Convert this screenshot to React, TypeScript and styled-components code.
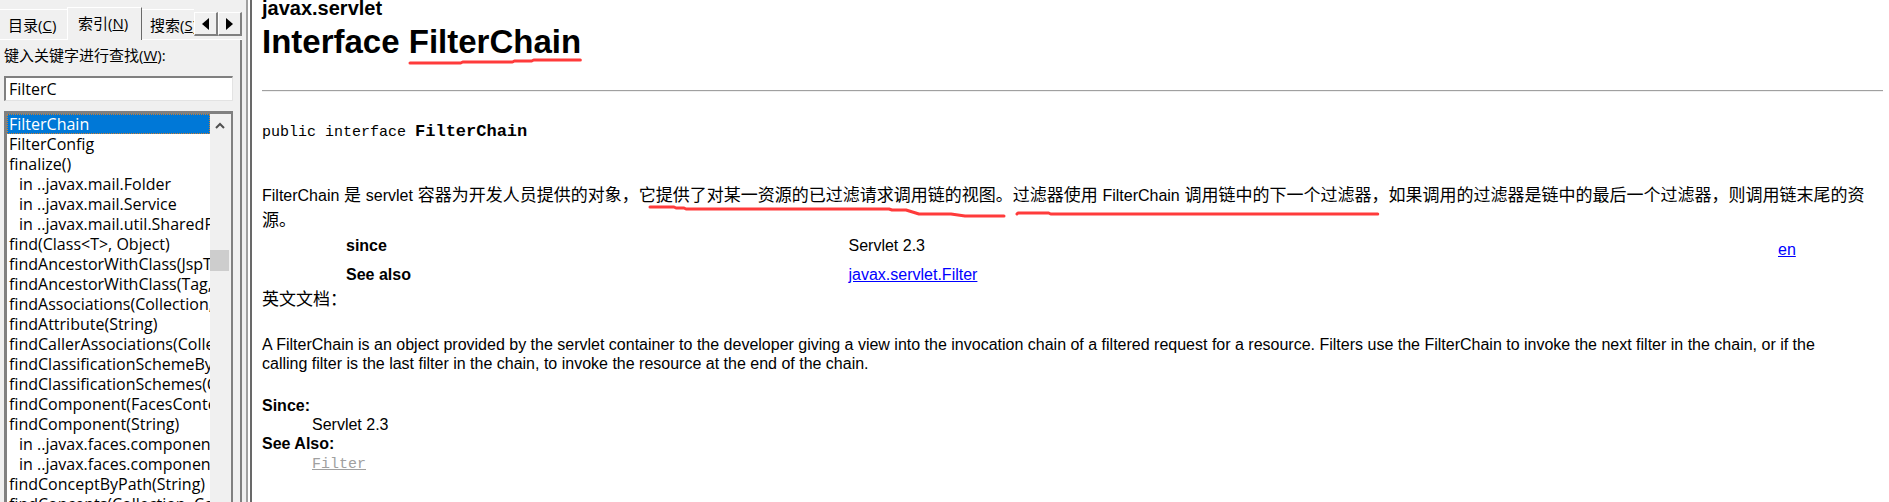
import React from "react";
import styled, { createGlobalStyle, css } from "styled-components";

const GlobalStyle = createGlobalStyle`
  *, *::before, *::after { box-sizing: border-box; }
  html, body { margin: 0; height: 100%; overflow: hidden; }
  #root { height: 100%; }
`;

const uiFont = `"Open Sans", "Noto Sans CJK SC", sans-serif`;
const docFont = `"Liberation Sans", Arial, "Noto Sans CJK SC", sans-serif`;
const monoFont = `"Liberation Mono", "Courier New", monospace`;

const Window = styled.div`
  display: flex;
  height: 100vh;
  background: #fff;
  color: #000;
`;

const Sidebar = styled.aside`
  flex: 0 0 246px;
  min-width: 0;
  display: flex;
  flex-direction: column;
  padding-right: 4px;
  background: #f0f0f0;
  font: 15px/20px ${uiFont};
`;

const Splitter = styled.div`
  flex: 0 0 6px;
  border: solid;
  border-width: 0 2px;
  border-color: #a0a0a0 #696969 #a0a0a0 #a0a0a0;
  background: #fff;
`;

const TabBar = styled.div`
  display: flex;
  align-items: flex-end;
  height: 40px;
  overflow: hidden;
`;

const Tab = styled.button<{ $active?: boolean; $width: number }>`
  flex: 0 0 ${(p) => p.$width}px;
  height: ${(p) => (p.$active ? 33 : 31)}px;
  padding: 0 0 0 8px;
  overflow: hidden;
  white-space: nowrap;
  font: inherit;
  color: inherit;
  text-align: left;
  background: #f0f0f0;
  border: 0 solid #fff;
  border-top-width: 1px;
  border-bottom-width: 1px;
  ${(p) =>
    p.$active &&
    css`
      border-width: 1px 1px 0 1px;
      border-right-color: #696969;
      padding: 0 0 2px 10px;
    `}
`;

const TabScrollers = styled.div`
  flex: 1;
  display: flex;
  height: 100%;
  align-items: flex-end;
  padding-bottom: 3px;
  border-bottom: 1px solid #fff;
`;

const TabScroll = styled.button`
  display: grid;
  place-items: center;
  flex: 0 0 24px;
  height: 24px;
  padding: 0;
  background: #f0f0f0;
  border: solid;
  border-width: 1px 2px 2px 1px;
  border-color: #fff #808080 #808080 #fff;
`;

const Panel = styled.div`
  flex: 1;
  min-height: 0;
  display: flex;
  flex-direction: column;
  padding: 4px 7px 0 4px;
  border-right: 2px solid #808080;
`;

const SearchLabel = styled.label`
  line-height: 22px;
`;

const SearchInput = styled.input`
  width: 100%;
  height: 25px;
  margin: 10px 0;
  padding: 0 3px;
  font: inherit;
  font-size: 16px;
  color: inherit;
  background: #fff;
  border: solid;
  border-width: 2px 1px 1px 2px;
  border-color: #808080 #e3e3e3 #e3e3e3 #808080;
  border-radius: 0;
  outline: none;
`;

const ListBox = styled.div`
  flex: 1;
  min-height: 0;
  display: flex;
  overflow: hidden;
  background: #fff;
  border: solid #808080;
  border-width: 3px 2px 0 3px;
`;

const Entries = styled.ul`
  flex: 1;
  min-width: 0;
  margin: 0;
  padding: 0;
  list-style: none;
  overflow: hidden;
  font-size: 16px;
`;

const Entry = styled.li<{ $nested?: boolean; $selected?: boolean }>`
  height: 20px;
  padding-left: ${(p) => (p.$nested ? 12 : 2)}px;
  overflow: hidden;
  white-space: nowrap;
  ${(p) =>
    p.$selected &&
    css`
      color: #fff;
      background: #0078d7;
      outline: 1px dotted #d08030;
      outline-offset: -1px;
    `}
`;

const ScrollTrack = styled.div`
  flex: 0 0 21px;
  display: flex;
  flex-direction: column;
  align-items: center;
  padding: 8px 2px 0 0;
  background: #f0f0f0;
`;

const ScrollThumb = styled.div`
  width: 19px;
  height: 21px;
  margin-top: 121px;
  background: #cdcdcd;
`;

const Doc = styled.main`
  flex: 1;
  min-width: 0;
  overflow: hidden;
  padding: 0 6px 0 10px;
  font: 16px/19px ${docFont};
`;

const Title = styled.h2`
  margin: 0;
  font-size: 33px;
  line-height: 38px;
`;

const Package = styled.span`
  display: block;
  margin-bottom: 7px;
  font-size: 20px;
  line-height: 16px;
`;

const Rule = styled.hr`
  height: 2px;
  margin: 29px 0 30px;
  border: 0;
  border-top: 1px solid #a0a0a0;
  border-bottom: 1px solid #f0f0f0;
`;

const Signature = styled.pre`
  margin: 0 0 40px;
  font: 15px/20px ${monoFont};

  b {
    font-size: 17px;
  }
`;

const Summary = styled.p`
  margin: 0;
  font-size: 17px;
  line-height: 25px;
`;

const Term = styled.span`
  font-size: 16px;
`;

const Marked = styled.span`
  position: relative;
`;

const Stroke = styled.svg`
  position: absolute;
  left: 0;
  top: 100%;
  width: 100%;
  height: 14px;
  overflow: visible;
  fill: none;
  stroke: #ff3b3b;
  stroke-width: 3px;
  stroke-linecap: round;
  stroke-linejoin: round;
`;

const Facts = styled.table`
  width: 100%;
  border-collapse: collapse;
  table-layout: fixed;

  th,
  td {
    height: 29px;
    padding: 3px 0 0;
    text-align: left;
    vertical-align: top;
  }
`;

const Col = styled.col<{ $share?: string }>`
  width: ${(p) => p.$share ?? "auto"};
`;

const DocLink = styled.a`
  color: #00f;
`;

const LanguageLink = styled(DocLink)`
  display: inline-block;
  padding-top: 4px;
`;

const Caption = styled.p`
  margin: 0 0 26px;
  font-size: 17px;
  line-height: 18px;
`;

const Description = styled.p`
  margin: 0;
  padding-right: 24px;
`;

const Details = styled.dl`
  margin: 23px 0 0;

  dt {
    font-weight: bold;
  }

  dd {
    margin: 0 0 0 50px;
  }
`;

const CodeLink = styled.a`
  font: 15px/19px ${monoFont};
  color: #a0a0a0;
`;

const entries: { text: string; nested?: boolean }[] = [
  { text: "FilterChain" },
  { text: "FilterConfig" },
  { text: "finalize()" },
  { text: "in ..javax.mail.Folder", nested: true },
  { text: "in ..javax.mail.Service", nested: true },
  { text: "in ..javax.mail.util.SharedFileInputStream", nested: true },
  { text: "find(Class<T>, Object)" },
  { text: "findAncestorWithClass(JspTag, Class)" },
  { text: "findAncestorWithClass(Tag, Class)" },
  { text: "findAssociations(Collection, String)" },
  { text: "findAttribute(String)" },
  { text: "findCallerAssociations(Collection)" },
  { text: "findClassificationSchemeByName(String)" },
  { text: "findClassificationSchemes(Collection)" },
  { text: "findComponent(FacesContext, String)" },
  { text: "findComponent(String)" },
  { text: "in ..javax.faces.component.UIComponent", nested: true },
  { text: "in ..javax.faces.component.UIViewRoot", nested: true },
  { text: "findConceptByPath(String)" },
  { text: "findConcepts(Collection, Collection)" },
];

export default function App() {
  return (
    <>
      <GlobalStyle />
      <Window>
        <Sidebar>
          <TabBar>
            <Tab $width={67}>目录(<u>C</u>)</Tab>
            <Tab $width={75} $active>索引(<u>N</u>)</Tab>
            <Tab $width={52}>搜索(<u>S</u>)</Tab>
            <TabScrollers>
              <TabScroll aria-label="Previous tabs">
                <svg width="7" height="12"><path d="M7 0v12L0 6z" /></svg>
              </TabScroll>
              <TabScroll aria-label="Next tabs">
                <svg width="7" height="12"><path d="M0 0v12l7-6z" /></svg>
              </TabScroll>
            </TabScrollers>
          </TabBar>
          <Panel>
            <SearchLabel htmlFor="keyword">键入关键字进行查找(<u>W</u>):</SearchLabel>
            <SearchInput id="keyword" type="text" defaultValue="FilterC" />
            <ListBox>
              <Entries>
                {entries.map((e, i) => (
                  <Entry key={e.text} $nested={e.nested} $selected={i === 0}>
                    {e.text}
                  </Entry>
                ))}
              </Entries>
              <ScrollTrack>
                <svg width="10" height="7" fill="none" stroke="#505050" strokeWidth="2">
                  <path d="M1 6l4-4 4 4" />
                </svg>
                <ScrollThumb />
              </ScrollTrack>
            </ListBox>
          </Panel>
        </Sidebar>
        <Splitter />
        <Doc>
          <Title>
            <Package>javax.servlet</Package>
            Interface{" "}
            <Marked>
              FilterChain
              <Stroke viewBox="0 0 170 14" preserveAspectRatio="none">
                <path d="M1 3H51L53 2H102L104 1H121L123 0H169" />
              </Stroke>
            </Marked>
          </Title>
          <Rule />
          <Signature>
            public interface <b>FilterChain</b>
          </Signature>
          <Summary>
            <Term>FilterChain</Term> 是 <Term>servlet</Term> 容器为开发人员提供的对象，它
            <Marked>
              提供了对某一资源的已过滤请求调用链的视图。
              <Stroke viewBox="0 0 357 14" preserveAspectRatio="none">
                <path d="M-6 2H18L20 3H28L30 4H233L236 5H250L263 9H295L309 11H348" />
              </Stroke>
            </Marked>
            <Marked>
              过滤器使用 <Term>FilterChain</Term> 调用链中的下一个过滤器
              <Stroke viewBox="0 0 362 14" preserveAspectRatio="none">
                <path d="M4 9L5 8H36L38 9H368" />
              </Stroke>
            </Marked>
            ，如果调用的过滤器是链中的最后一个过滤器，则调用链末尾的资源。
          </Summary>
          <Facts>
            <colgroup>
              <Col $share="84px" />
              <Col $share="31%" />
              <Col />
              <Col $share="105px" />
            </colgroup>
            <tbody>
              <tr>
                <td />
                <th scope="row">since</th>
                <td>Servlet 2.3</td>
                <td><LanguageLink href="#en">en</LanguageLink></td>
              </tr>
              <tr>
                <td />
                <th scope="row">See also</th>
                <td><DocLink href="#filter">javax.servlet.Filter</DocLink></td>
                <td />
              </tr>
            </tbody>
          </Facts>
          <Caption>英文文档：</Caption>
          <Description>
            A FilterChain is an object provided by the servlet container to the developer giving a view into the
            invocation chain of a filtered request for a resource. Filters use the FilterChain to invoke the next
            filter in the chain, or if the calling filter is the last filter in the chain, to invoke the resource at
            the end of the chain.
          </Description>
          <Details>
            <dt>Since:</dt>
            <dd>Servlet 2.3</dd>
            <dt>See Also:</dt>
            <dd><CodeLink href="#filter">Filter</CodeLink></dd>
          </Details>
        </Doc>
      </Window>
    </>
  );
}
